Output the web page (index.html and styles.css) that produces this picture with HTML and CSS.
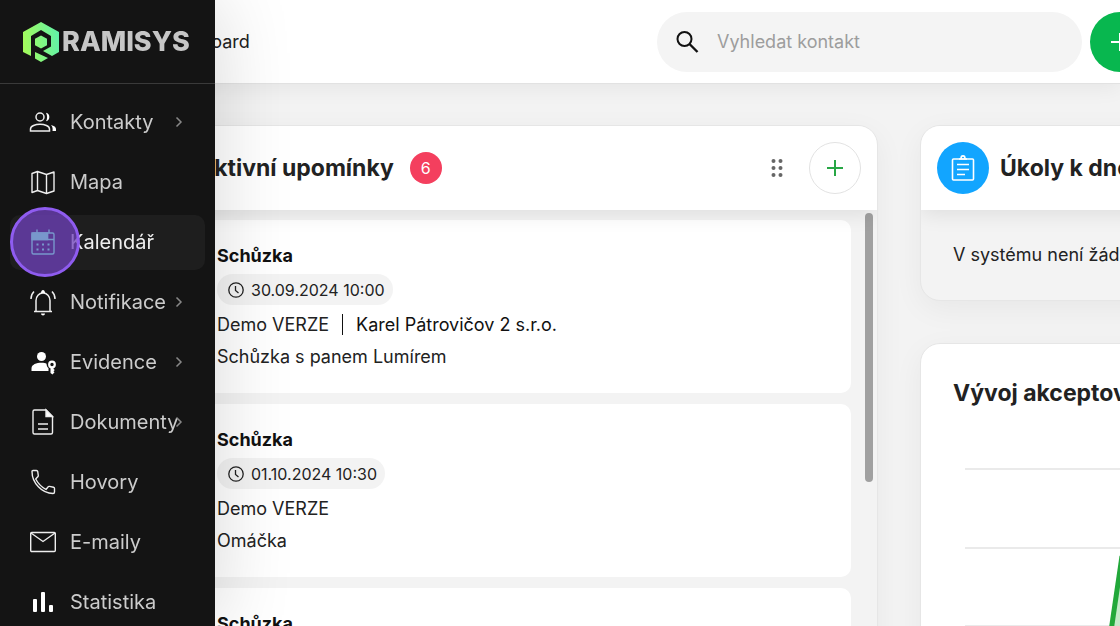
FILE: index.html
```html
<!DOCTYPE html>
<html lang="cs">
<head>
<meta charset="utf-8">
<title>Ramisys – Dashboard</title>
<link rel="stylesheet" href="styles.css">
</head>
<body>
<div class="page">
  <header class="topbar">
    <span class="crumb">Dashboard</span>
    <div class="actions">
      <label class="search">
        <svg class="search-icon" viewBox="0 0 24 24" fill="none" stroke="#111" stroke-width="2"><circle cx="9.500" cy="9" r="7"/><path d="M14.500 14l8 8" stroke-width="2.400"/></svg>
        <input class="search-input" type="text" placeholder="Vyhledat kontakt" aria-label="Vyhledat kontakt">
      </label>
      <button class="create" type="button" aria-label="Vytvořit"><svg class="create-icon" viewBox="0 0 20 20" stroke="#fff" stroke-width="2"><path d="M10 1v18M1 10h18"/></svg></button>
    </div>
  </header>
  <main class="board">
    <section class="card reminders">
      <div class="card-head">
        <h2 class="card-title">Aktivní upomínky</h2>
        <span class="count">6</span>
        <svg class="grip" viewBox="0 0 12 20" fill="#666"><circle cx="2.500" cy="3" r="2"/><circle cx="9.500" cy="3" r="2"/><circle cx="2.500" cy="10" r="2"/><circle cx="9.500" cy="10" r="2"/><circle cx="2.500" cy="17" r="2"/><circle cx="9.500" cy="17" r="2"/></svg>
        <button class="add" type="button" aria-label="Přidat upomínku"><svg class="add-icon" viewBox="0 0 18 18" stroke="#28a745" stroke-width="2"><path d="M9 1v16M1 9h16"/></svg></button>
      </div>
      <div class="list">
        <div class="items">
          <article class="item">
            <h3 class="item-title">Schůzka</h3>
            <span class="when"><svg class="clock" viewBox="0 0 16 16" fill="none" stroke="#222" stroke-width="1.300"><circle cx="8" cy="8" r="7.200"/><path d="M7.500 4v4.500l3 2.500"/></svg>30.09.2024 10:00</span>
            <p class="line">Demo VERZE<span class="firm">Karel Pátrovičov 2 s.r.o.</span></p>
            <p class="line">Schůzka s panem Lumírem</p>
          </article>
          <article class="item">
            <h3 class="item-title">Schůzka</h3>
            <span class="when"><svg class="clock" viewBox="0 0 16 16" fill="none" stroke="#222" stroke-width="1.300"><circle cx="8" cy="8" r="7.200"/><path d="M7.500 4v4.500l3 2.500"/></svg>01.10.2024 10:30</span>
            <p class="line">Demo VERZE</p>
            <p class="line">Omáčka</p>
          </article>
          <article class="item">
            <h3 class="item-title">Schůzka</h3>
          </article>
        </div>
        <div class="track"><div class="thumb"></div></div>
      </div>
    </section>
    <div class="side">
      <section class="card tasks">
        <div class="card-head">
          <span class="badge"><svg class="badge-icon" viewBox="0 0 26 28" fill="none" stroke="#fff" stroke-width="1.600"><rect x="2.500" y="5" width="21" height="21" rx="1"/><path d="M7 10.500h12M7 15.500h12M7 20.500h8"/><path d="M9 5h8M11 4.500c0-3.500 4-3.500 4 0"/></svg></span>
          <h2 class="card-title">Úkoly k dnešnímu dni</h2>
        </div>
        <p class="empty">V systému není žádný úkol</p>
      </section>
      <section class="card trend">
        <h2 class="card-title">Vývoj akceptovaných nabídek</h2>
        <svg class="chart" width="300" height="240" viewBox="0 0 300 240"><path d="M0 25h300M0 104h300M0 182h300" stroke="#e3e3e3" stroke-width="1.600"/><path d="M146 194L158 112V194z" fill="#c4eac9"/><path d="M145 194L157 112" stroke="#22a83a" stroke-width="5"/></svg>
      </section>
    </div>
  </main>
</div>

<aside class="sidebar">
  <div class="brand">
    <svg class="logo" viewBox="-1 -1 38 42"><defs><linearGradient id="lg" gradientUnits="userSpaceOnUse" x1="0" y1="22" x2="36" y2="18"><stop offset="0" stop-color="#a4fb5a"/><stop offset="1" stop-color="#62f3a8"/></linearGradient></defs><g fill="url(#lg)"><path d="M18 0l18 10v20l-7 4-9-5 8-4.500V14L18 8 8 14v20l-8-4V10z"/><path d="M18 13.500l6 3.200v6.600L18 26.500l-6-3.200v-6.600z"/><path d="M12 30l13 6-7 4-6-3.500z"/></g></svg>
    <span class="brand-name">RAMISYS</span>
  </div>
  <nav class="menu">
    <a class="link" href="#"><svg class="icon" viewBox="0 0 28 28" fill="none" stroke="#eee" stroke-width="1.500"><circle cx="11" cy="9" r="4"/><path d="M1.500 23v-2c0-3 5-4.700 9.500-4.700s9.500 1.700 9.500 4.700v2z"/><path d="M17 4.700c4.500 1 4.500 7.500 0 8.600 1.500-3 1.500-5.600 0-8.600zM22 17c3 .8 5 2 5 4v2h-3.500c.3-2 .3-4-1.500-6z" fill="#fff" stroke="none"/></svg><span class="label">Kontakty</span><svg class="chev" viewBox="0 0 8 12"><path d="M1.500 1.500L6 6l-4.500 4.500"/></svg></a>
    <a class="link" href="#"><svg class="icon" viewBox="0 0 28 28" fill="none" stroke="#eee" stroke-width="1.400" stroke-linejoin="round"><path d="M3 5.500l5.500-2 9 3 7.500-2.500v19l-7.500 2.500-9-3-5.500 2zM8.500 3.500v19M17.500 6.500v19"/></svg><span class="label">Mapa</span></a>
    <a class="link active" href="#"><svg class="icon" viewBox="0 0 28 28" fill="none" stroke="#7897cc" stroke-width="1.400"><rect x="3" y="5" width="22" height="21" rx="1.500"/><path d="M3 11.500h22M8 1.500V5M20 1.500V5M18.500 5v6.500"/><path d="M3 5h15.500v6.500H3z" fill="#7897cc"/><path d="M7.500 16.500h2m3.500 0h2m3.500 0h2m-13 5h2m3.500 0h2m3.500 0h2" stroke-width="2"/></svg><span class="label">Kalendář</span></a>
    <a class="link" href="#"><svg class="icon" viewBox="0 0 28 28" fill="none" stroke="#eee" stroke-width="1.500"><path d="M5 23.500h18M7 23.500V12.500c0-4 3-7.500 7-7.500s7 3.500 7 7.500v11M5 3.500C3 5.500 2 8 2 11M23 3.500c2 2 3 4.500 3 7.500"/><path d="M12 5c0-4 4-4 4 0zM12 25.500h4c0 2.500-4 2.500-4 0z" fill="#fff" stroke="none"/></svg><span class="label">Notifikace</span><svg class="chev" viewBox="0 0 8 12"><path d="M1.500 1.500L6 6l-4.500 4.500"/></svg></a>
    <a class="link" href="#"><svg class="icon" viewBox="0 0 28 28" fill="#fff"><circle cx="12.500" cy="8.500" r="4.500"/><path d="M2.500 23v-2.500c0-4 5-5.700 10-5.700 2.200 0 4 .3 5 1 .2 2 .6 3.200 2 4.200v3z"/><circle cx="23" cy="16.500" r="2.800" fill="none" stroke="#fff" stroke-width="2.200"/><path d="M21.500 19h3v2l1.300 1-1.300 1.200 1 1-2 2.300-2-1.500z"/></svg><span class="label">Evidence</span><svg class="chev" viewBox="0 0 8 12"><path d="M1.500 1.500L6 6l-4.500 4.500"/></svg></a>
    <a class="link" href="#"><svg class="icon" viewBox="0 0 28 28" fill="none" stroke="#eee" stroke-width="1.400"><path d="M4 3.500Q4 2 5.500 2H17l6.500 6.500v16Q23.500 26 22 26H5.500Q4 26 4 24.500zM9 16h10M9 21h10"/><path d="M17 2v6.500h6.500z" fill="#fff"/></svg><span class="label">Dokumenty</span><svg class="chev" viewBox="0 0 8 12"><path d="M1.500 1.500L6 6l-4.500 4.500"/></svg></a>
    <a class="link" href="#"><svg class="icon" viewBox="0 0 28 28" fill="none" stroke="#eee" stroke-width="1.400" stroke-linejoin="round"><path d="M3 3.500q0-1 1-1h3.500q1 0 1.200 1l.6 4q0 1-.8 1.600L6.700 11C9 15.500 12.500 19 17 21.500l2-2.500q.5-.8 1.500-.6l4 .8q1 .3 1 1.300V24q0 1.500-1.500 1.500C13 25.500 3 15 3 3.500z"/></svg><span class="label">Hovory</span></a>
    <a class="link" href="#"><svg class="icon" viewBox="0 0 28 28" fill="none" stroke="#eee" stroke-width="1.400"><rect x="1.700" y="4.500" width="24.600" height="19" rx="1"/><path d="M2 5l12 8.500L26 5"/></svg><span class="label">E-maily</span></a>
    <a class="link" href="#"><svg class="icon" viewBox="0 0 28 28" fill="#fff"><rect x="4" y="11" width="4" height="13" rx="1"/><rect x="12" y="4" width="4" height="20" rx="1"/><rect x="20" y="17" width="4" height="7" rx="1"/></svg><span class="label">Statistika</span></a>
  </nav>
  <span class="marker"></span>
</aside>
</body>
</html>
```
FILE: styles.css
```css
* { box-sizing: border-box; }
body {
  margin: 0;
  font-family: Inter, "Liberation Sans", sans-serif;
  font-size: 18px;
  color: #222;
  background: #f3f3f3;
}
h2, h3, p { margin: 0; }
button { padding: 0; border: 0; cursor: pointer; }
.page { height: 100vh; overflow: hidden; }

.topbar {
  position: relative;
  z-index: 1;
  display: flex;
  align-items: center;
  justify-content: space-between;
  height: 84px;
  padding-left: 157px;
  background: #fff;
  border-bottom: 1px solid #e2e2e2;
  box-shadow: 0 4px 20px rgba(0, 0, 0, .06);
}
.actions { display: flex; gap: 8px; margin-right: -30px; }
.search {
  display: flex;
  align-items: center;
  gap: 18px;
  width: 425px;
  height: 60px;
  padding: 0 18px;
  border-radius: 30px;
  background: #f4f4f4;
}
.search-icon { width: 24px; height: 24px; }
.search-input {
  flex: 1;
  min-width: 0;
  border: 0;
  outline: 0;
  padding: 0;
  background: transparent;
  font: inherit;
}
.search-input::placeholder { color: #9d9d9d; opacity: 1; }
.create {
  display: grid;
  place-items: center;
  width: 60px;
  height: 60px;
  border-radius: 50%;
  background: #08b74f;
}
.create-icon { width: 20px; height: 20px; }

/* The board runs under the open sidebar and past the right edge. */
.board {
  display: grid;
  grid-template-columns: 698px 420px;
  align-items: start;
  gap: 42px;
  padding: 41px 0 0 180px;
}
.card {
  border: 1px solid #e6e6e6;
  border-radius: 20px;
  background: #f3f3f3;
  box-shadow: 0 8px 30px rgba(0, 0, 0, .05);
  overflow: hidden;
}
.card-head {
  position: relative;
  z-index: 1;
  display: flex;
  align-items: center;
  height: 84px;
  padding: 0 16px;
  background: #fff;
  box-shadow: 0 4px 20px rgba(0, 0, 0, .09);
}
.card-title {
  font-size: 23px;
  line-height: 30px;
  font-weight: 700;
  white-space: nowrap;
}
.count {
  margin-left: 16px;
  width: 32px;
  height: 32px;
  border-radius: 50%;
  background: #f43f5e;
  color: #fff;
  font-size: 16px;
  line-height: 32px;
  text-align: center;
}
.grip { width: 12px; height: 20px; margin-left: auto; margin-right: 26px; }
.add {
  display: grid;
  place-items: center;
  width: 52px;
  height: 52px;
  border: 1px solid #e2e2e2;
  border-radius: 50%;
  background: #fff;
}
.add-icon { width: 18px; height: 18px; }

.list { display: flex; gap: 14px; padding-right: 4px; }
.items { flex: 1; display: grid; gap: 11px; padding-top: 10px; }
.item {
  height: 173px;
  padding: 24px 36px;
  border-radius: 10px;
  background: #fff;
}
.item-title { font-size: 18px; line-height: 24px; font-weight: 700; color: #111; }
.when {
  display: inline-flex;
  align-items: center;
  gap: 7px;
  height: 31px;
  margin-top: 6px;
  padding: 0 8px 0 11px;
  border-radius: 16px;
  background: #f3f3f3;
  font-size: 16px;
}
.clock { width: 16px; height: 16px; }
.line { line-height: 24px; margin-top: 8px; color: #222; }
.firm { margin-left: 13px; padding-left: 13px; border-left: 1px solid #111; color: #111; }
.track { width: 8px; padding-top: 3px; }
.thumb { height: 269px; border-radius: 4px; background: #a0a0a0; }

.side { display: grid; gap: 42px; }
.badge {
  display: grid;
  place-items: center;
  width: 52px;
  height: 52px;
  margin-right: 11px;
  border-radius: 50%;
  background: #12a5ff;
}
.badge-icon { width: 26px; height: 28px; }
.empty { padding: 32px; line-height: 26px; white-space: nowrap; }
.trend { padding: 34px 32px; background: #fff; }
.chart { display: block; margin: 36px 0 0 12px; }

.sidebar {
  position: fixed;
  z-index: 2;
  top: 0;
  bottom: 0;
  left: 0;
  width: 215px;
  background: #141414;
  box-shadow: 0 0 80px rgba(0, 0, 0, .16);
}
.brand {
  display: flex;
  align-items: center;
  height: 84px;
  padding-left: 22px;
  border-bottom: 1px solid #3a3a3a;
}
.logo { width: 38px; height: 42px; }
.brand-name { margin-left: 2px; color: #c6c6c6; font: 800 27px Inter, sans-serif; }
.menu { display: grid; gap: 5px; padding: 11px 10px; }
.link {
  display: flex;
  align-items: center;
  height: 55px;
  padding: 0 22px 1px 19px;
  border-radius: 10px;
  color: #ccc;
  font-size: 20px;
  text-decoration: none;
}
.active { background: #1e1e1e; color: #eee; }
.icon { width: 28px; height: 28px; margin-right: 13px; }
.active .icon { position: relative; z-index: 2; }
.label { flex: 1; width: 0; }
.chev { width: 8px; height: 12px; fill: none; stroke: #888; stroke-width: 1.5; }
.marker {
  position: absolute;
  z-index: 1;
  top: 207px;
  left: 10px;
  width: 70px;
  height: 70px;
  border: 3px solid #8f5cf0;
  border-radius: 50%;
  background: rgba(112, 66, 190, .75);
}
```
